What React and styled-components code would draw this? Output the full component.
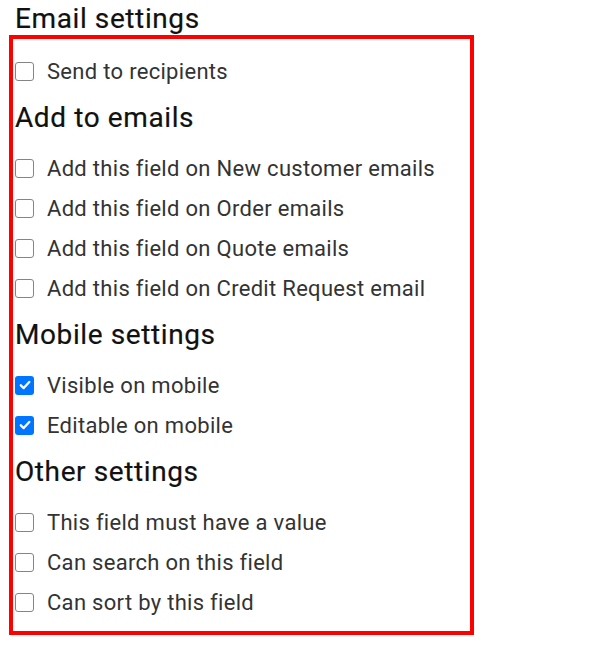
import styled, { createGlobalStyle } from "styled-components";

const GlobalStyle = createGlobalStyle`
  body {
    margin: 0;
    background: #ffffff;
    font-family: Roboto, "Liberation Sans", Arial, sans-serif;
  }
`;

const Page = styled.div`
  width: 602px;
  height: 649px;
  padding-left: 9px;
  box-sizing: border-box;
`;

const Heading = styled.h2`
  margin: ${(props) => (props.$first ? "3px 0 0 6px" : "11px 0 14px 2px")};
  font-size: 28px;
  line-height: 32px;
  font-weight: 400;
  letter-spacing: 0.6px;
  color: #111111;
  -webkit-text-stroke: 0.2px #111111;
`;

const Frame = styled.div`
  width: 465px;
  height: 600px;
  box-sizing: border-box;
  border: 4px solid #ff0000;
  padding-top: 12px;
`;

const Row = styled.label`
  display: flex;
  align-items: center;
  height: 40px;
  padding-left: 2px;
  font-size: 22px;
  letter-spacing: 0.3px;
  color: #333333;
`;

const Box = styled.span`
  flex: 0 0 auto;
  width: 19px;
  height: 19px;
  box-sizing: border-box;
  border-radius: 3px;
  margin-right: 13px;
  border: ${(props) => (props.$checked ? "none" : "1.5px solid #858585")};
  background: ${(props) => (props.$checked ? "#0075ff" : "#ffffff")};
  display: flex;
  align-items: center;
  justify-content: center;
`;

const Check = ({ checked }) => (
  <Box $checked={checked}>
    {checked && (
      <svg width="14" height="14" viewBox="0 0 14 14">
        <path
          d="M2.8 7.3 L5.7 10.1 L11.3 3.9"
          fill="none"
          stroke="#ffffff"
          strokeWidth="2.3"
          strokeLinecap="round"
          strokeLinejoin="round"
        />
      </svg>
    )}
  </Box>
);

const Option = ({ checked, children }) => (
  <Row>
    <Check checked={checked} />
    {children}
  </Row>
);

const App = () => {
  return (
    <Page>
      <GlobalStyle />
      <Heading $first>Email settings</Heading>
      <Frame>
        <Option>Send to recipients</Option>
        <Heading>Add to emails</Heading>
        <Option>Add this field on New customer emails</Option>
        <Option>Add this field on Order emails</Option>
        <Option>Add this field on Quote emails</Option>
        <Option>Add this field on Credit Request email</Option>
        <Heading>Mobile settings</Heading>
        <Option checked>Visible on mobile</Option>
        <Option checked>Editable on mobile</Option>
        <Heading>Other settings</Heading>
        <Option>This field must have a value</Option>
        <Option>Can search on this field</Option>
        <Option>Can sort by this field</Option>
      </Frame>
    </Page>
  );
};

export default App;
